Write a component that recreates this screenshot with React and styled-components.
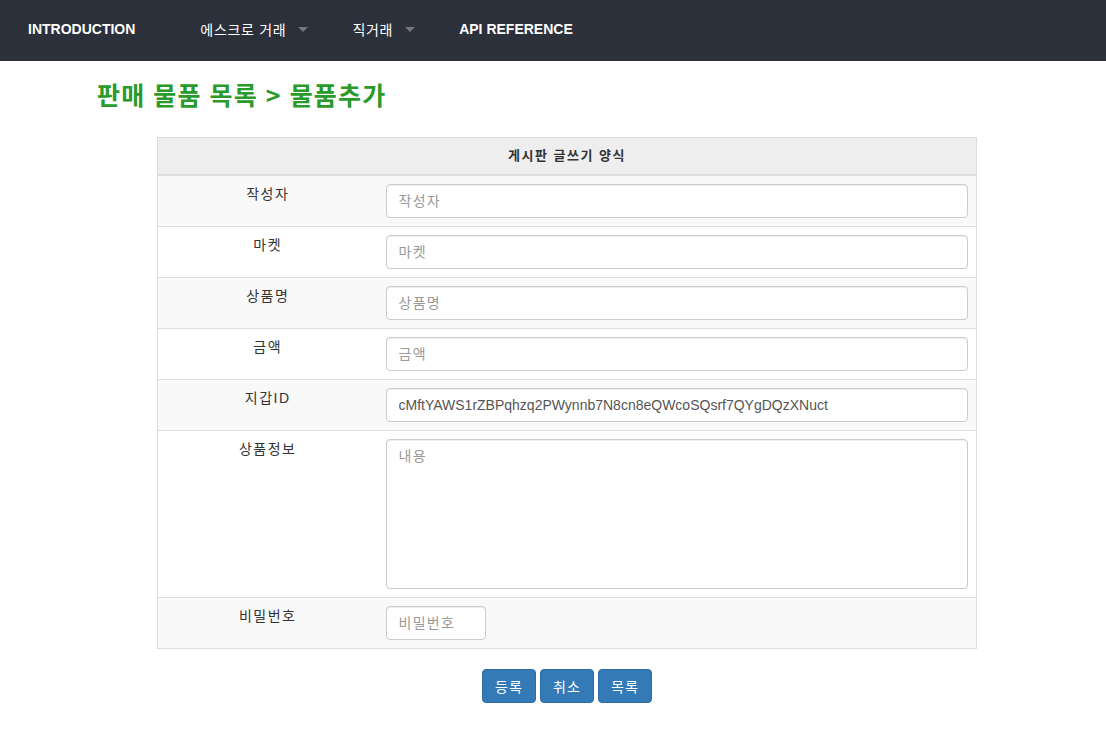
import styled, { createGlobalStyle } from 'styled-components';

const GlobalStyle = createGlobalStyle`
  body {
    margin: 0;
    background: #fff;
    font-family: "Liberation Sans", "Noto Sans CJK KR", Arial, sans-serif;
    font-size: 14px;
    color: #333;
  }
  * { box-sizing: border-box; }
`;

const Navbar = styled.nav`
  height: 61px;
  background-color: #2c303a;
  display: flex;
  align-items: center;
  padding: 0 0 4px 28px;
`;

const Brand = styled.a`
  color: #fff;
  font-weight: bold;
  font-size: 14px;
  margin-right: 43px;
`;

const NavItem = styled.a`
  display: flex;
  align-items: center;
  padding: 0 22px;
  color: #fff;
  font-size: 14px;
  font-weight: ${p => (p.$bold ? 'bold' : 'normal')};
  letter-spacing: ${p => (p.$bold ? '0' : '0.7px')};
`;

const Caret = styled.span`
  width: 0;
  height: 0;
  margin-left: 12px;
  margin-top: 2px;
  border-left: 5px solid transparent;
  border-right: 5px solid transparent;
  border-top: 5px solid #777;
`;

const Title = styled.h2`
  margin: 0;
  padding: 18px 0 0 97px;
  font-size: 25px;
  line-height: 30px;
  letter-spacing: 1.2px;
  word-spacing: 1px;
  font-weight: bold;
  color: #2a9a2a;
  font-family: "Noto Sans CJK KR", "Liberation Sans", sans-serif;
`;

const FormWrap = styled.div`
  width: 820px;
  margin: 28px 0 0 157px;
`;

const Table = styled.table`
  width: 100%;
  border-collapse: collapse;
  border: 1px solid #ddd;
`;

const HeadCell = styled.th`
  background-color: #eee;
  padding: 8px;
  line-height: 20px;
  font-size: 13px;
  letter-spacing: 1.5px;
  text-align: center;
  border-bottom: 2px solid #ddd;
  color: #333;
`;

const Row = styled.tr`
  background-color: ${p => (p.$striped ? '#f9f9f9' : '#fff')};
  border-top: 1px solid #ddd;
`;

const Label = styled.td`
  width: 220px;
  padding: 8px;
  line-height: 20px;
  text-align: center;
  vertical-align: top;
  font-size: 14px;
  letter-spacing: 1.5px;
`;

const Field = styled.td`
  padding: 8px;
  vertical-align: top;
`;

const Input = styled.input`
  display: block;
  width: ${p => p.$width || '100%'};
  height: 34px;
  padding: 6px 12px;
  font-size: 14px;
  font-family: inherit;
  color: #555;
  background: #fff;
  border: 1px solid #ccc;
  border-radius: 4px;
  box-shadow: inset 0 1px 1px rgba(0, 0, 0, 0.075);
  &::placeholder { color: #999; letter-spacing: 1.3px; }
`;

const TextArea = styled.textarea`
  display: block;
  width: 100%;
  height: 150px;
  padding: 6px 12px;
  font-size: 14px;
  font-family: inherit;
  line-height: 20px;
  border: 1px solid #ccc;
  border-radius: 4px;
  resize: none;
  box-shadow: inset 0 1px 1px rgba(0, 0, 0, 0.075);
  &::placeholder { color: #999; letter-spacing: 1.3px; }
`;

const Buttons = styled.div`
  display: flex;
  justify-content: center;
  gap: 4px;
  margin-top: 20px;
`;

const Button = styled.button`
  width: 54px;
  height: 34px;
  background-color: #337ab7;
  border: 1px solid #2e6da4;
  border-radius: 4px;
  color: #fff;
  font-size: 14px;
  letter-spacing: 1px;
  font-family: inherit;
  cursor: pointer;
`;

const fields = [
  { label: '작성자', placeholder: '작성자' },
  { label: '마켓', placeholder: '마켓' },
  { label: '상품명', placeholder: '상품명' },
  { label: '금액', placeholder: '금액' },
  { label: '지갑ID', value: 'cMftYAWS1rZBPqhzq2PWynnb7N8cn8eQWcoSQsrf7QYgDQzXNuct' },
];

const App = () => {
  return (
    <>
      <GlobalStyle />
      <Navbar>
        <Brand>INTRODUCTION</Brand>
        <NavItem>에스크로 거래<Caret /></NavItem>
        <NavItem>직거래<Caret /></NavItem>
        <NavItem $bold>API REFERENCE</NavItem>
      </Navbar>
      <Title>판매 물품 목록 &gt; 물품추가</Title>
      <FormWrap>
        <Table>
          <thead>
            <tr>
              <HeadCell colSpan={2}>게시판 글쓰기 양식</HeadCell>
            </tr>
          </thead>
          <tbody>
            {fields.map((f, i) => (
              <Row key={f.label} $striped={i % 2 === 0}>
                <Label>{f.label}</Label>
                <Field>
                  <Input placeholder={f.placeholder} defaultValue={f.value} />
                </Field>
              </Row>
            ))}
            <Row>
              <Label>상품정보</Label>
              <Field>
                <TextArea placeholder="내용" />
              </Field>
            </Row>
            <Row $striped>
              <Label>비밀번호</Label>
              <Field>
                <Input type="password" placeholder="비밀번호" $width="100px" />
              </Field>
            </Row>
          </tbody>
        </Table>
        <Buttons>
          <Button>등록</Button>
          <Button>취소</Button>
          <Button>목록</Button>
        </Buttons>
      </FormWrap>
    </>
  );
};

export default App;
